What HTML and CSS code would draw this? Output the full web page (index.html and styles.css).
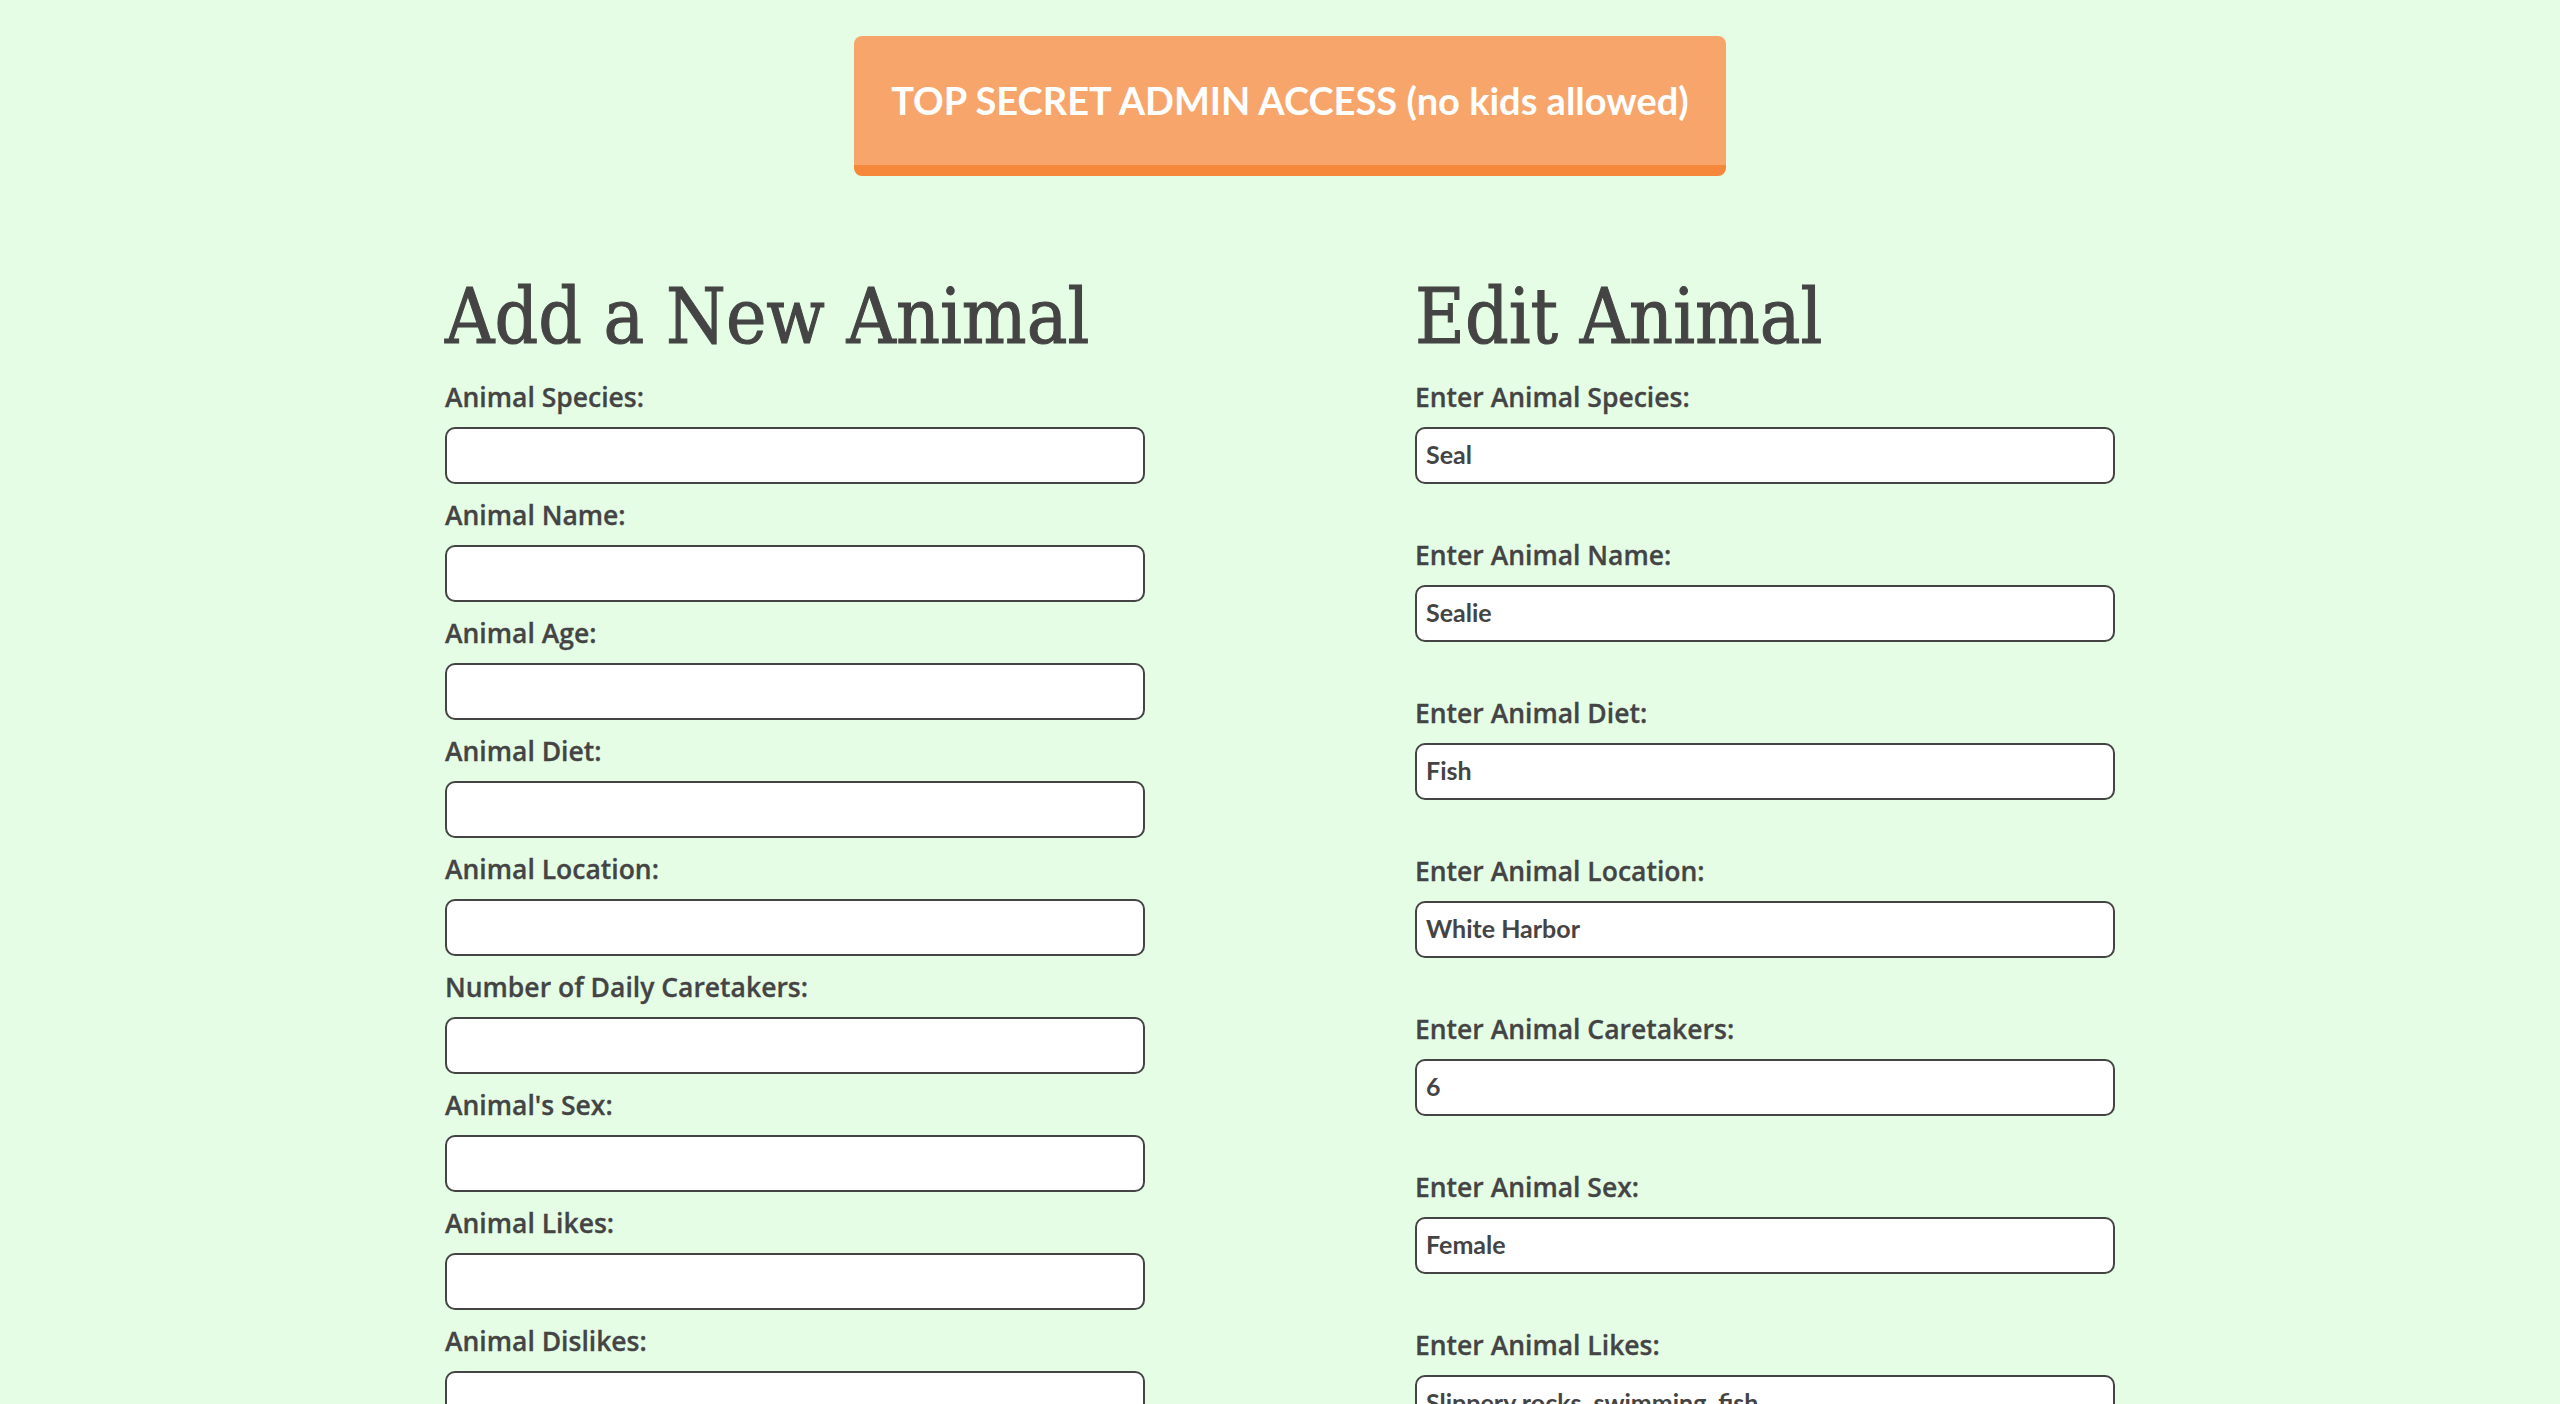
FILE: index.html
```html
<!DOCTYPE html>
<html lang="en">
<head>
<meta charset="utf-8">
<title>Zoo Admin</title>
<link rel="stylesheet" href="styles.css">
</head>
<body>
<div class="top">
  <button class="admin-btn" type="button">TOP SECRET ADMIN ACCESS (no kids allowed)</button>
</div>
<div class="forms">
  <form class="panel add">
    <h1 class="title">Add a New Animal</h1>
    <div class="group"><label class="lbl">Animal Species:</label><input class="field" type="text"></div>
    <div class="group"><label class="lbl">Animal Name:</label><input class="field" type="text"></div>
    <div class="group"><label class="lbl">Animal Age:</label><input class="field" type="text"></div>
    <div class="group"><label class="lbl">Animal Diet:</label><input class="field" type="text"></div>
    <div class="group"><label class="lbl">Animal Location:</label><input class="field" type="text"></div>
    <div class="group"><label class="lbl">Number of Daily Caretakers:</label><input class="field" type="text"></div>
    <div class="group"><label class="lbl">Animal's Sex:</label><input class="field" type="text"></div>
    <div class="group"><label class="lbl">Animal Likes:</label><input class="field" type="text"></div>
    <div class="group"><label class="lbl">Animal Dislikes:</label><input class="field" type="text"></div>
  </form>
  <form class="panel edit">
    <h1 class="title">Edit Animal</h1>
    <div class="group"><label class="lbl">Enter Animal Species:</label><input class="field" type="text" value="Seal"></div>
    <div class="group"><label class="lbl">Enter Animal Name:</label><input class="field" type="text" value="Sealie"></div>
    <div class="group"><label class="lbl">Enter Animal Diet:</label><input class="field" type="text" value="Fish"></div>
    <div class="group"><label class="lbl">Enter Animal Location:</label><input class="field" type="text" value="White Harbor"></div>
    <div class="group"><label class="lbl">Enter Animal Caretakers:</label><input class="field" type="text" value="6"></div>
    <div class="group"><label class="lbl">Enter Animal Sex:</label><input class="field" type="text" value="Female"></div>
    <div class="group"><label class="lbl">Enter Animal Likes:</label><input class="field" type="text" value="Slippery rocks, swimming, fish"></div>
    <div class="group"><label class="lbl">Enter Animal Dislikes:</label><input class="field" type="text" value="Sharks"></div>
  </form>
</div>
</body>
</html>
```
FILE: styles.css
```css
html, body {
  margin: 0;
  padding: 0;
}
body {
  background: #e5fde4;
  color: #444444;
  font-family: Lato, "Open Sans", sans-serif;
}
.top {
  display: flex;
  justify-content: center;
  padding-top: 36px;
  padding-left: 20px;
}
.admin-btn {
  width: 872px;
  height: 140px;
  box-sizing: border-box;
  background: #f8a56b;
  border: none;
  border-bottom: 11px solid #f5883a;
  border-radius: 8px;
  color: #ffffff;
  font-family: Lato, "Open Sans", sans-serif;
  font-weight: 700;
  font-size: 38px;
  line-height: 44px;
  padding: 0 10px 2px;
}
.forms {
  display: flex;
  justify-content: center;
  gap: 270px;
  margin-top: 96px;
}
.panel {
  width: 700px;
  display: flex;
  flex-direction: column;
}
.title {
  font-family: "DejaVu Serif Condensed", "DejaVu Serif", serif;
  font-weight: 400;
  font-size: 76px;
  line-height: 90px;
  margin: 0 0 20px 0;
  -webkit-text-stroke: 1px #444444;
}
.group {
  display: flex;
  flex-direction: column;
}
.add .group {
  margin-bottom: 16px;
}
.edit .group {
  margin-bottom: 56px;
}
.lbl {
  font-family: "Open Sans", Lato, sans-serif;
  font-weight: 600;
  font-size: 26.5px;
  line-height: 30px;
  margin-bottom: 15px;
  -webkit-text-stroke: 0.3px #444444;
}
.field {
  width: 700px;
  height: 57px;
  box-sizing: border-box;
  border: 2px solid #444444;
  border-radius: 10px;
  background: #ffffff;
  padding: 0 9px 4px;
  font-family: Lato, "Open Sans", sans-serif;
  font-weight: 700;
  font-size: 25px;
  color: #444444;
}
```
